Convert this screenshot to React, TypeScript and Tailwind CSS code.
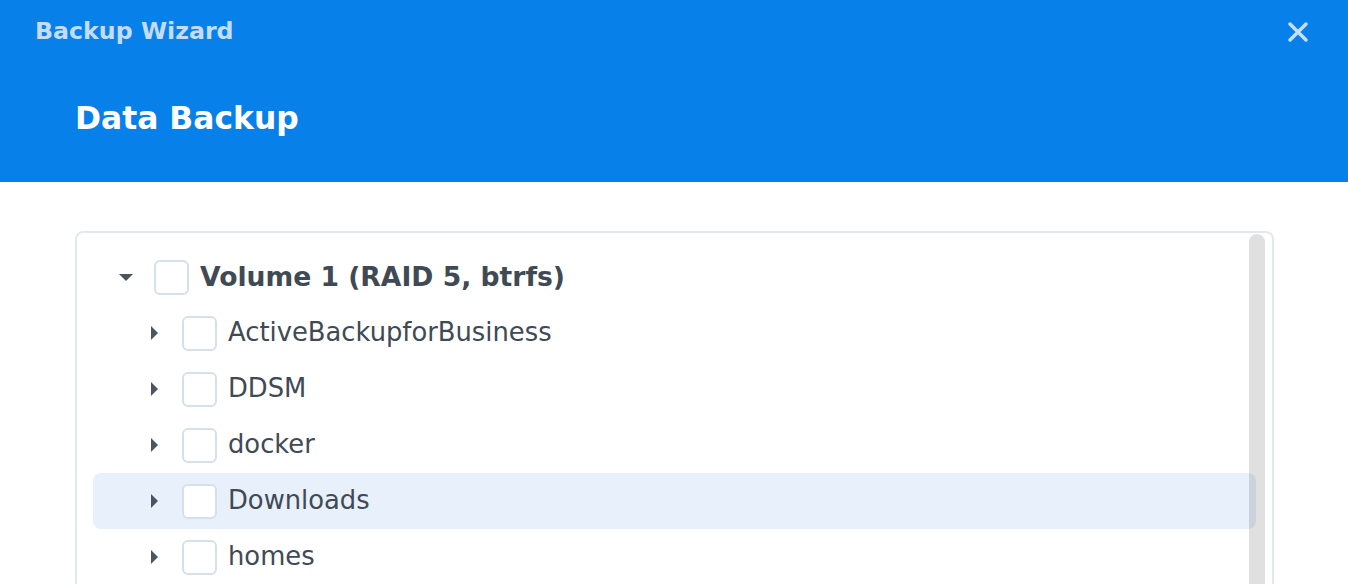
import React from "react";

const font = { fontFamily: '"DejaVu Sans", Verdana, sans-serif' };

function CaretDown() {
  return (
    <svg width="16" height="9" viewBox="0 0 16 9" className="block">
      <path d="M1 1 L15 1 L8 8 Z" fill="#4a5561" />
    </svg>
  );
}

function CaretRight() {
  return (
    <svg width="9" height="16" viewBox="0 0 9 16" className="block">
      <path d="M1 1 L1 15 L8 8 Z" fill="#4a5561" />
    </svg>
  );
}

function Checkbox() {
  return <div className="w-[35px] h-[35px] rounded-[6px] border-2 border-[#d6e0ec] bg-white shrink-0" />;
}

type Item = { name: string; active?: boolean };

const items: Item[] = [
  { name: "ActiveBackupforBusiness" },
  { name: "DDSM" },
  { name: "docker" },
  { name: "Downloads", active: true },
  { name: "homes" },
];

export default function App() {
  return (
    <div className="w-[1348px] h-[584px] overflow-hidden bg-white" style={font}>
      <div className="h-[182px] bg-[#0880ea] flex flex-col">
        <div className="h-[64px] flex items-center justify-between pl-[35px] pr-[40px]">
          <div className="text-[23.7px] font-bold text-[#c3dcfa] leading-none">Backup Wizard</div>
          <svg width="20" height="20" viewBox="0 0 20 20" className="block">
            <path d="M2 2 L18 18 M18 2 L2 18" stroke="#c9defa" strokeWidth="3.4" strokeLinecap="round" />
          </svg>
        </div>
        <div className="pl-[75px] pt-[39px] text-[31.4px] font-bold text-white leading-none">Data Backup</div>
      </div>
      <div className="pl-[75px] pr-[74px] pt-[49px]">
        <div className="relative border-2 border-[#e2e8f1] rounded-[8px] h-[400px] p-4 overflow-hidden">
          <div className="flex items-center h-[56px] pl-[25px]">
            <CaretDown />
            <div className="ml-[20px]"><Checkbox /></div>
            <div className="ml-[11px] text-[26.6px] font-bold text-[#404a55] leading-none">Volume 1 (RAID 5, btrfs)</div>
          </div>
          {items.map((it) => (
            <div
              key={it.name}
              className={
                "flex items-center h-[56px] pl-[57px] rounded-[8px] " + (it.active ? "bg-[#e8f0fb]" : "")
              }
            >
              <CaretRight />
              <div className="ml-[23px]"><Checkbox /></div>
              <div className="ml-[11px] text-[25.8px] text-[#404a55] leading-none">{it.name}</div>
            </div>
          ))}
          <div className="absolute right-[7px] top-[1px] w-[16px] h-[420px] rounded-full bg-black/[0.12]" />
        </div>
      </div>
    </div>
  );
}
